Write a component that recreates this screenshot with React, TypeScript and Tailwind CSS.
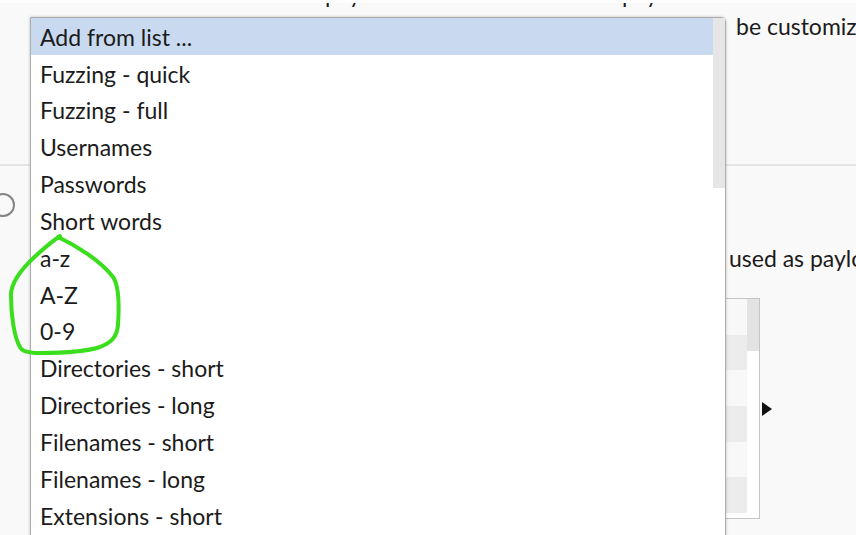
const payloadLists = [
  'Add from list ...',
  'Fuzzing - quick',
  'Fuzzing - full',
  'Usernames',
  'Passwords',
  'Short words',
  'a-z',
  'A-Z',
  '0-9',
  'Directories - short',
  'Directories - long',
  'Filenames - short',
  'Filenames - long',
  'Extensions - short',
  'Extensions - long',
]

const stripes = ['bg-[#f8f8f8]', 'bg-[#ececec]', 'bg-[#f8f8f8]', 'bg-[#ececec]', 'bg-[#f8f8f8]', 'bg-[#ececec]']

function PayloadDropdown() {
  return (
    <div className="absolute left-[30px] top-[17px] flex w-[696px] rounded-tr-[5px] border border-[#adadad] bg-white shadow-[0_0_3px_rgba(0,0,0,0.25)]">
      <ul className="flex-1">
        {payloadLists.map((item, index) => (
          <li
            key={item}
            className={`flex h-[36.85px] items-center pl-[9px] pt-[1px] whitespace-nowrap ${
              index === 0 ? 'bg-[#c9daf0]' : ''
            }`}
          >
            {item}
          </li>
        ))}
      </ul>
      <div className="w-[12px] shrink-0">
        <div className="h-[170px] bg-[#e6e6e6]" />
      </div>
    </div>
  )
}

function Annotation() {
  return (
    <svg className="pointer-events-none absolute left-0 top-0" width="856" height="535" viewBox="0 0 856 535">
      <path
        d="M 58 237 C 75 245, 100 260, 113 277 C 120 287, 119 310, 118 325 C 117 338, 110 343, 100 347 C 85 352, 60 353, 40 353 C 30 353, 22 352, 20 347 C 14 337, 11 315, 11 295 C 11 280, 25 265, 40 252 C 48 245, 54 240, 60 236"
        fill="none"
        stroke="#3ade1c"
        strokeWidth="4"
        strokeLinecap="round"
        strokeLinejoin="round"
      />
    </svg>
  )
}

export default function App() {
  return (
    <div className="relative h-[535px] w-[856px] overflow-hidden bg-[#f9f9f9] font-['Lato','Liberation_Sans',sans-serif] text-[23px] text-[#1b1b1b]">
      {/* payload sets description, mostly scrolled out of view */}
      <section className="flex h-[166px] flex-col border-b-2 border-[#e4e4e4]">
        <div className="-mt-[21px] flex h-[30px] shrink-0 whitespace-nowrap leading-[30px]">
          <span className="ml-[325px] w-[297px] shrink-0">payload</span>
          <span className="shrink-0">payload</span>
        </div>
        <div className="mt-[2px] h-[30px] shrink-0 whitespace-nowrap pl-[736px] leading-[30px]">be customized in different ways.</div>
      </section>

      {/* payload settings */}
      <section className="flex flex-col pt-[27px]">
        <div className="-ml-[9px] h-[24px] w-[24px] rounded-full border-2 border-[#858585]" />
        <div className="mt-[26px] h-[30px] whitespace-nowrap pl-[729px] leading-[30px]">used as payloads.</div>
        <div className="mt-[25px] flex items-center">
          <div className="ml-[400px] flex h-[221px] w-[360px] border border-[#c4c4c4] bg-white">
            <div className="flex-1">
              {stripes.map((cls, i) => (
                <div key={i} className={`h-[35.7px] ${cls}`} />
              ))}
            </div>
            <div className="w-[12px]">
              <div className="h-[52px] bg-[#e3e3e3]" />
            </div>
          </div>
          <svg className="ml-[2px]" width="11" height="14" viewBox="0 0 11 14">
            <path d="M0 0 L10 7 L0 14 Z" fill="#111" />
          </svg>
        </div>
      </section>

      <div className="absolute left-0 top-0 h-[3px] w-full bg-[#fdfdfd]" />
      <PayloadDropdown />
      <Annotation />
    </div>
  )
}
